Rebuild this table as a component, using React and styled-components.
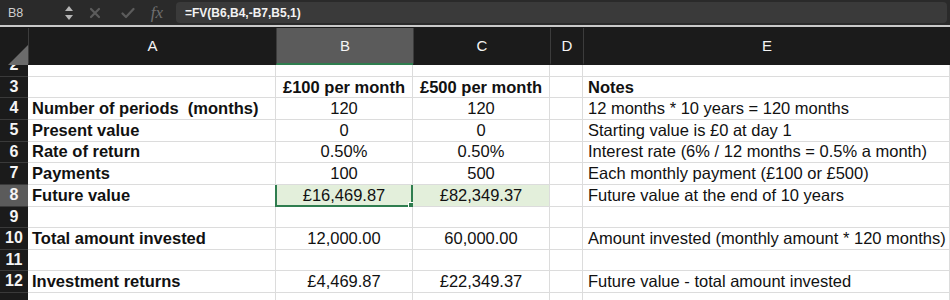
import React from "react";
import styled, { createGlobalStyle } from "styled-components";

const GlobalStyle = createGlobalStyle`
  html, body { margin: 0; padding: 0; background: #fff; }
  body { font-family: "Liberation Sans", Arial, sans-serif; overflow: hidden; }
`;

const COLS = "28px 248px 137px 137px 33px 1fr";
const ROW_H = 21.65;

const rows = [
  { n: 3, a: "", b: "£100 per month", c: "£500 per month", e: "Notes", bold: true },
  { n: 4, a: "Number of periods  (months)", b: "120", c: "120", e: "12 months * 10 years = 120 months" },
  { n: 5, a: "Present value", b: "0", c: "0", e: "Starting value is £0 at day 1" },
  { n: 6, a: "Rate of return", b: "0.50%", c: "0.50%", e: "Interest rate (6% / 12 months = 0.5% a month)" },
  { n: 7, a: "Payments", b: "100", c: "500", e: "Each monthly payment (£100 or £500)" },
  { n: 8, a: "Future value", b: "£16,469.87", c: "£82,349.37", e: "Future value at the end of 10 years", selected: true },
  { n: 9 },
  { n: 10, a: "Total amount invested", b: "12,000.00", c: "60,000.00", e: "Amount invested (monthly amount * 120 months)" },
  { n: 11 },
  { n: 12, a: "Investment returns", b: "£4,469.87", c: "£22,349.37", e: "Future value - total amount invested" },
];

const Page = styled.div`
  width: 950px;
  height: 300px;
  overflow: hidden;
  display: flex;
  flex-direction: column;
`;

const FormulaBar = styled.div`
  height: 25px;
  background: #2a2a2a;
  display: flex;
  align-items: center;
  color: #d8d8d8;
  font-size: 12px;
`;

const NameBox = styled.div`
  width: 62px;
  padding-left: 8px;
  box-sizing: border-box;
  color: #cfcfcf;
  font-size: 12.5px;
`;

const Stepper = styled.div`
  width: 14px;
  display: flex;
  flex-direction: column;
  align-items: center;
  gap: 2px;
`;

const IconSlot = styled.div`
  width: ${(p) => p.$w}px;
  display: flex;
  justify-content: center;
  align-items: center;
`;

const Fx = styled.span`
  font-family: "Liberation Serif", "Times New Roman", serif;
  font-style: italic;
  font-size: 17px;
  color: #6f6f6f;
`;

const FormulaInput = styled.div`
  flex: 1;
  height: 21px;
  margin: 0 3px 0 4px;
  background: #3a3a3a;
  border-radius: 4px;
  display: flex;
  align-items: center;
  padding-left: 9px;
  color: #f2f2f2;
  font-size: 12px;
  font-weight: bold;
`;

const Divider = styled.div`
  height: 3px;
  background: #1b1b1b;
  border-top: 2px solid #c9c9c9;
  box-sizing: border-box;
`;

const HeaderRow = styled.div`
  display: grid;
  grid-template-columns: ${COLS};
  height: 37px;
  background: #1b1b1b;
`;

const Corner = styled.div`
  position: relative;
  background: #1b1b1b;
  &::after {
    content: "";
    position: absolute;
    right: 0;
    bottom: 0;
    width: 0;
    height: 0;
    border-style: solid;
    border-width: 0 0 20px 20px;
    border-color: transparent transparent #6b6b6b transparent;
  }
`;

const ColHead = styled.div`
  display: flex;
  align-items: center;
  justify-content: center;
  color: #f4f4f4;
  font-size: 15px;
  border-left: 1px solid #3c3c3c;
  box-sizing: border-box;
  background: ${(p) => (p.$active ? "#5b5b5b" : "#1b1b1b")};
  border-bottom: 2px solid ${(p) => (p.$active ? "#2f7d4f" : "#1b1b1b")};
`;

const Row = styled.div`
  display: grid;
  grid-template-columns: ${COLS};
  height: ${(p) => p.$h}px;
  flex-shrink: 0;
  overflow: hidden;
`;

const RowHead = styled.div`
  background: ${(p) => (p.$active ? "#5b5b5b" : "#1b1b1b")};
  color: #f4f4f4;
  font-size: 16px;
  font-weight: bold;
  display: flex;
  align-items: flex-end;
  justify-content: center;
  border-bottom: 1px solid #3a3a3a;
  box-sizing: border-box;
  overflow: hidden;
`;

const RowNum = styled.span`
  display: block;
  height: ${ROW_H - 1}px;
  line-height: ${ROW_H - 1}px;
  flex-shrink: 0;
`;

const Cell = styled.div`
  position: relative;
  display: flex;
  align-items: center;
  justify-content: ${(p) => (p.$center ? "center" : "flex-start")};
  padding-left: ${(p) => p.$pad ?? 0}px;
  font-size: 16.5px;
  font-weight: ${(p) => (p.$bold ? "bold" : "normal")};
  color: #111;
  white-space: pre;
  border-right: 1px solid #dcdcdc;
  border-bottom: 1px solid #dcdcdc;
  box-sizing: border-box;
  background: ${(p) => (p.$sel ? "#e3efdb" : "#fff")};
`;

const ActiveFrame = styled.div`
  position: absolute;
  left: -1px;
  top: -2px;
  right: -1px;
  bottom: -1px;
  border: 2px solid #2f7d4f;
  pointer-events: none;
  &::after {
    content: "";
    position: absolute;
    right: -4px;
    bottom: -4px;
    width: 5px;
    height: 5px;
    background: #2f7d4f;
    border: 1px solid #fff;
  }
`;

const Cells = styled.div`
  display: flex;
  flex-direction: column;
  flex: 1;
  overflow: hidden;
`;

const Chevrons = () => (
  <>
    <svg width="10" height="7" viewBox="0 0 10 7">
      <path d="M1 6 L5 1 L9 6 Z" fill="#b5b5b5" />
    </svg>
    <svg width="10" height="7" viewBox="0 0 10 7">
      <path d="M1 1 L5 6 L9 1 Z" fill="#b5b5b5" />
    </svg>
  </>
);

const CrossIcon = () => (
  <svg width="12" height="12" viewBox="0 0 12 12">
    <path d="M2 2 L10 10 M10 2 L2 10" stroke="#5c5c5c" strokeWidth="2.2" strokeLinecap="round" />
  </svg>
);

const CheckIcon = () => (
  <svg width="14" height="12" viewBox="0 0 14 12">
    <path d="M1.5 6.5 L5 10 L12.5 2" stroke="#5c5c5c" strokeWidth="2.2" fill="none" strokeLinecap="round" strokeLinejoin="round" />
  </svg>
);

const SheetRow = ({ r, h, hideNum }) => (
  <Row $h={h}>
    <RowHead $active={r.selected}>
      <RowNum>{hideNum ? "" : r.n}</RowNum>
    </RowHead>
    <Cell $bold $pad={4}>{r.a}</Cell>
    <Cell $center $bold={r.bold} $sel={r.selected}>
      {r.b}
      {r.selected && <ActiveFrame />}
    </Cell>
    <Cell $center $bold={r.bold} $sel={r.selected}>{r.c}</Cell>
    <Cell />
    <Cell $bold={r.bold} $pad={5}>{r.e}</Cell>
  </Row>
);

export default function App() {
  return (
    <Page>
      <GlobalStyle />
      <FormulaBar>
        <NameBox>B8</NameBox>
        <Stepper>
          <Chevrons />
        </Stepper>
        <IconSlot $w={38}>
          <CrossIcon />
        </IconSlot>
        <IconSlot $w={28}>
          <CheckIcon />
        </IconSlot>
        <IconSlot $w={30}>
          <Fx>fx</Fx>
        </IconSlot>
        <FormulaInput>=FV(B6,B4,-B7,B5,1)</FormulaInput>
      </FormulaBar>
      <Divider />
      <HeaderRow>
        <Corner />
        <ColHead>A</ColHead>
        <ColHead $active>B</ColHead>
        <ColHead>C</ColHead>
        <ColHead>D</ColHead>
        <ColHead>E</ColHead>
      </HeaderRow>
      <Cells>
        <SheetRow r={{ n: 2 }} h={11.7} />
        {rows.map((r) => (
          <SheetRow key={r.n} r={r} h={ROW_H} />
        ))}
        <SheetRow r={{ n: 13 }} h={ROW_H} hideNum />
      </Cells>
    </Page>
  );
}
